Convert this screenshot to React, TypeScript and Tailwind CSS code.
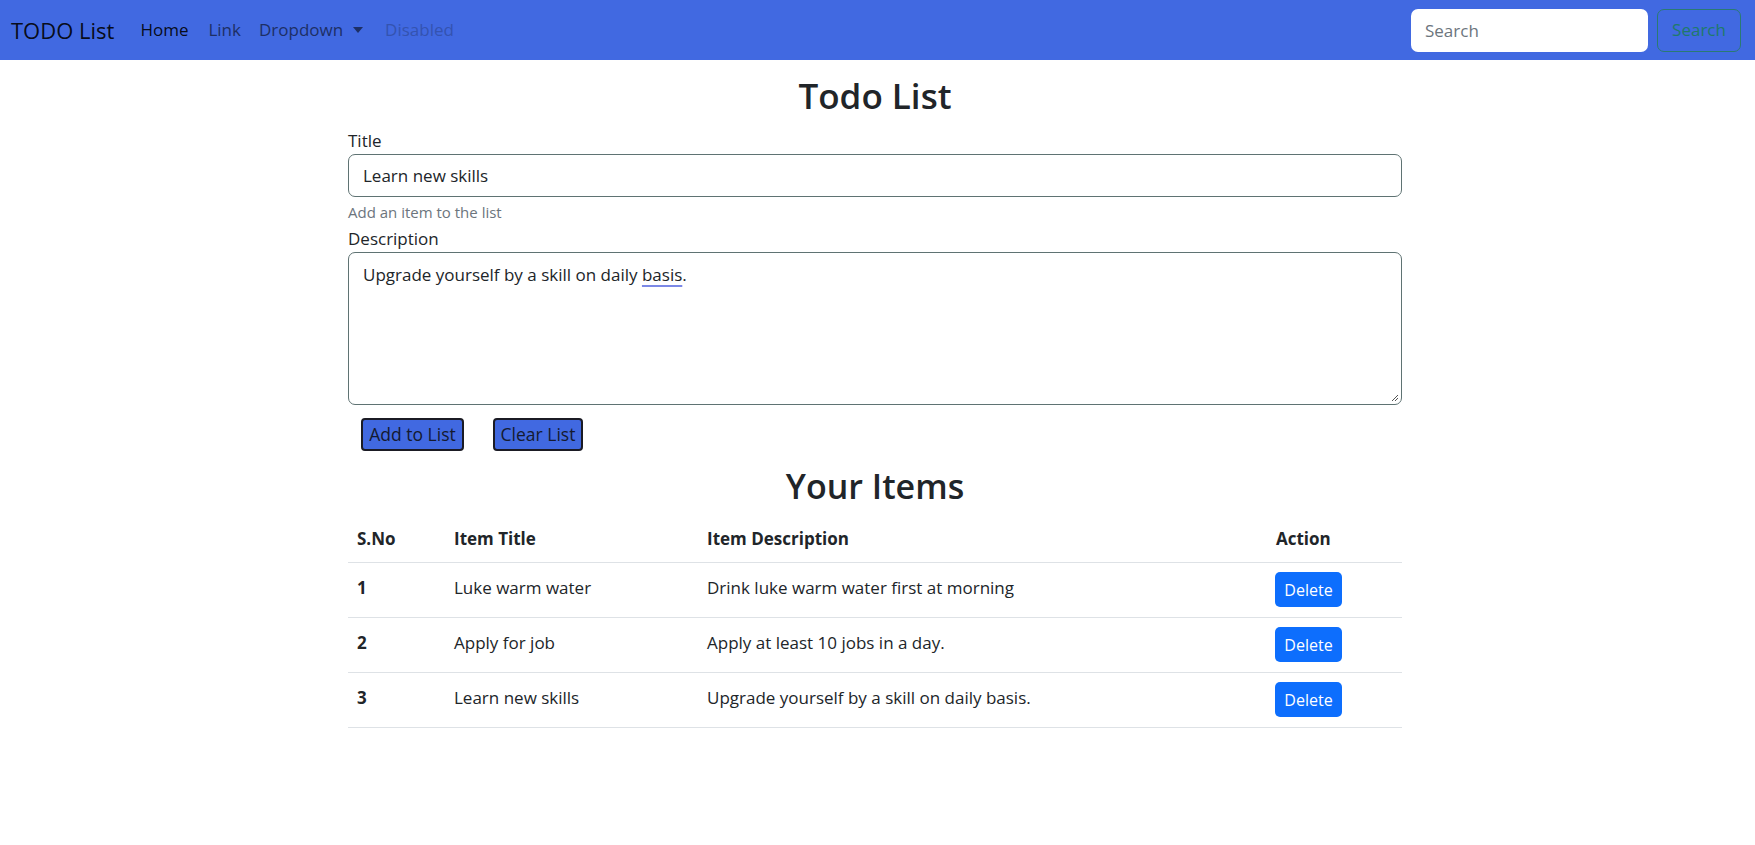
import React from 'react';

type Todo = { sno: number; title: string; desc: string };

const todos: Todo[] = [
  { sno: 1, title: 'Luke warm water', desc: 'Drink luke warm water first at morning' },
  { sno: 2, title: 'Apply for job', desc: 'Apply at least 10 jobs in a day.' },
  { sno: 3, title: 'Learn new skills', desc: 'Upgrade yourself by a skill on daily basis.' },
];

const Navbar: React.FC = () => (
  <nav className="h-[60px] bg-[#4169e1] flex items-center pl-[11px] pr-[14px]">
    <span className="text-[22px] text-black/90 mr-[17px] leading-none">TODO List</span>
    <ul className="flex items-center text-[17px]">
      <li className="pl-[9px] pr-[11px] text-black/90">Home</li>
      <li className="px-[9px] text-[#1d2f65]">Link</li>
      <li className="px-[9px] text-[#1d2f65] flex items-center">
        Dropdown
        <span className="ml-[10px] mr-[4px] w-0 h-0 border-l-[5px] border-r-[5px] border-t-[6px] border-l-transparent border-r-transparent border-t-[#1d2f65]" />
      </li>
      <li className="px-[9px] text-[#3453b0]">Disabled</li>
    </ul>
    <div className="ml-auto flex items-center gap-[9px]">
      <input
        className="w-[237px] h-[43px] rounded-[7px] bg-white px-[14px] text-[17px] text-[#212529] placeholder:text-[#6c757d] outline-none"
        placeholder="Search"
      />
      <button className="w-[84px] h-[43px] rounded-[7px] border border-[#2a7a72] text-[#1f7a6a] text-[17px]">
        Search
      </button>
    </div>
  </nav>
);

export default function App() {
  return (
    <div className="min-h-screen bg-white text-[#212529]" style={{ fontFamily: '"Open Sans", "Noto Sans", sans-serif' }}>
      <Navbar />
      <main className="w-[1054px] ml-[348px]">
        <h2 className="mt-[14px] h-[43px] leading-[43px] text-center text-[35px] font-semibold">Todo List</h2>

        <label className="block mt-[11px] leading-[26px] text-[17px]">Title</label>
        <div className="h-[43px] rounded-[7px] border border-[#5f7373] flex items-center px-[14px] text-[17px]">
          Learn new skills
        </div>
        <div className="mt-[4px] h-[22px] leading-[22px] text-[15px] text-[#6c757d]">Add an item to the list</div>

        <label className="block mt-[3px] leading-[26px] text-[17px]">Description</label>
        <div className="relative h-[153px] rounded-[7px] border border-[#5f7373] px-[14px] pt-[8px] text-[17px] leading-[27px]">
          Upgrade yourself by a skill on daily{' '}
          <span className="underline decoration-[#7b88e6] decoration-2 underline-offset-[4px]">basis</span>.
          <svg className="absolute right-[2px] bottom-[2px]" width="9" height="9" viewBox="0 0 9 9">
            <path d="M8 2 L2 8 M8 5 L5 8" stroke="#555" strokeWidth="1" />
          </svg>
        </div>

        <div className="mt-[13px] flex gap-[29px] pl-[13px]">
          <button className="h-[33px] w-[103px] rounded-[4px] bg-[#4169e1] border-2 border-[#1b1b24] text-[17.5px] text-[#141a30]">
            Add to List
          </button>
          <button className="h-[33px] w-[90px] rounded-[4px] bg-[#4169e1] border-2 border-[#1b1b24] text-[17.5px] text-[#141a30]">
            Clear List
          </button>
        </div>

        <h2 className="mt-[14px] h-[43px] leading-[43px] text-center text-[34px] font-semibold">Your Items</h2>

        <table className="mt-[8px] w-full text-[17px] border-collapse">
          <thead>
            <tr className="h-[46px] border-b border-[#dee2e6] text-left">
              <th className="w-[97px] pl-[9px] font-bold">S.No</th>
              <th className="w-[253px] pl-[9px] font-bold">Item Title</th>
              <th className="w-[569px] pl-[9px] font-bold">Item Description</th>
              <th className="pl-[9px] font-bold">Action</th>
            </tr>
          </thead>
          <tbody>
            {todos.map((t) => (
              <tr key={t.sno} className="h-[55px] border-b border-[#dee2e6]">
                <th className="pl-[9px] pb-[4px] text-left font-bold">{t.sno}</th>
                <td className="pl-[9px] pb-[4px]">{t.title}</td>
                <td className="pl-[9px] pb-[4px]">{t.desc}</td>
                <td className="pl-[8px]">
                  <button className="w-[67px] h-[35px] rounded-[5px] bg-[#0d6efd] text-white text-[16px]">Delete</button>
                </td>
              </tr>
            ))}
          </tbody>
        </table>
      </main>
    </div>
  );
}
